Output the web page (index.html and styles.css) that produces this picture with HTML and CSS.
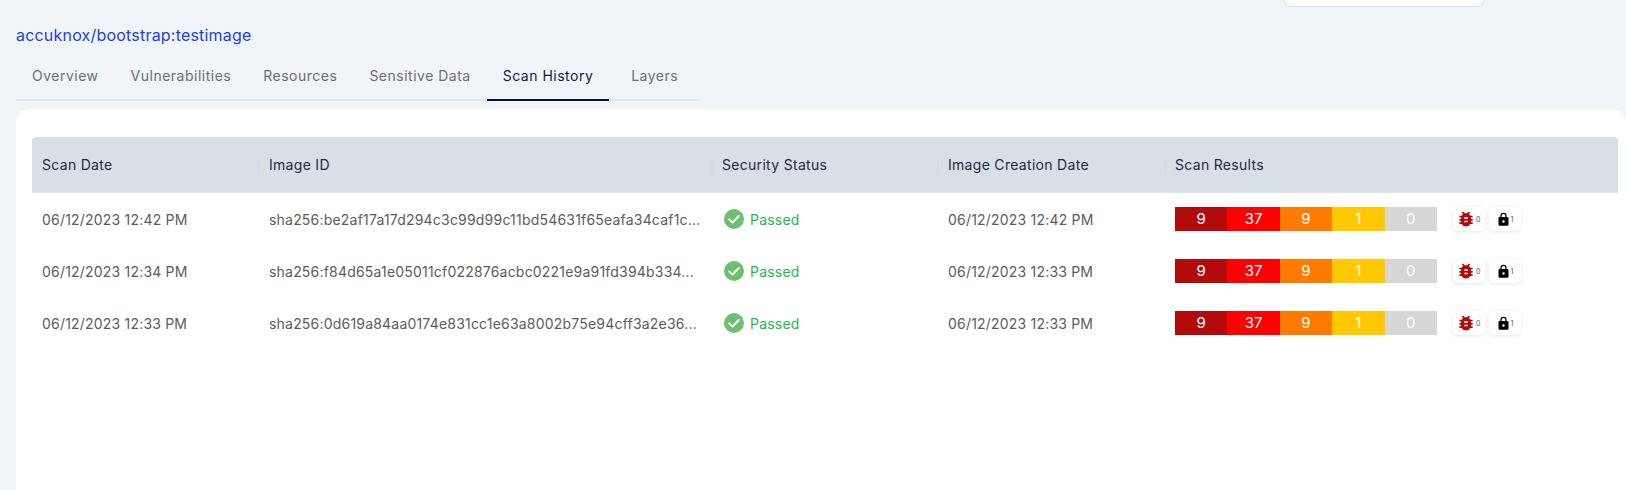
FILE: index.html
```html
<!DOCTYPE html>
<html lang="en">
<head>
    <meta charset="UTF-8">
    <meta name="viewport" content="width=device-width, initial-scale=1.0">
    <title>Scan History</title>
    <link rel="stylesheet" href="styles.css">
</head>
<body>
    <div class="topbar"><div class="search-stub"></div></div>
    <h1 class="image-name">accuknox/bootstrap:testimage</h1>

    <div class="tabs">
        <a class="tab">Overview</a>
        <a class="tab">Vulnerabilities</a>
        <a class="tab">Resources</a>
        <a class="tab">Sensitive Data</a>
        <a class="tab active">Scan History</a>
        <a class="tab tab-last">Layers</a>
    </div>

    <div class="card">
        <div class="row head">
            <div>Scan Date</div>
            <div>Image ID</div>
            <div>Security Status</div>
            <div>Image Creation Date</div>
            <div>Scan Results</div>
        </div>

        <div class="row">
            <div>06/12/2023 12:42 PM</div>
            <div class="hash">sha256:be2af17a17d294c3c99d99c11bd54631f65eafa34caf1c...</div>
            <div class="status">
                <svg class="check" viewBox="0 0 20 20"><circle cx="10" cy="10" r="10"/><path d="M5.2 10.4l3.3 3.2 6.3-6.6"/></svg>
                Passed
            </div>
            <div>06/12/2023 12:42 PM</div>
            <div class="results">
                <div class="bar"><span class="crit">9</span><span class="high">37</span><span class="med">9</span><span class="low">1</span><span class="none">0</span></div>
                <div class="chip">
                    <svg class="bug" viewBox="0 0 24 24"><path d="M20 8h-2.8a6 6 0 0 0-1.8-2l1.6-1.6L15.6 3l-2.2 2.2a6 6 0 0 0-2.8 0L8.4 3 7 4.4 8.6 6a6 6 0 0 0-1.8 2H4v2h2.1a6 6 0 0 0-.1 1v1H4v2h2v1c0 .3 0 .7.1 1H4v2h2.8a6 6 0 0 0 10.4 0H20v-2h-2.1c.1-.3.1-.7.1-1v-1h2v-2h-2v-1c0-.3 0-.7-.1-1H20zm-6 8h-4v-2h4zm0-4h-4v-2h4z"/></svg>
                    <small>0</small>
                </div>
                <div class="chip">
                    <svg class="lock" viewBox="0 0 24 24"><path d="M18 8h-1V6a5 5 0 0 0-10 0v2H6a2 2 0 0 0-2 2v10c0 1.1.9 2 2 2h12a2 2 0 0 0 2-2V10a2 2 0 0 0-2-2zm-6 9a2 2 0 1 1 0-4 2 2 0 0 1 0 4zM9 8V6a3 3 0 0 1 6 0v2z"/></svg>
                    <small>1</small>
                </div>
            </div>
        </div>

        <div class="row">
            <div>06/12/2023 12:34 PM</div>
            <div class="hash">sha256:f84d65a1e05011cf022876acbc0221e9a91fd394b334...</div>
            <div class="status">
                <svg class="check" viewBox="0 0 20 20"><circle cx="10" cy="10" r="10"/><path d="M5.2 10.4l3.3 3.2 6.3-6.6"/></svg>
                Passed
            </div>
            <div>06/12/2023 12:33 PM</div>
            <div class="results">
                <div class="bar"><span class="crit">9</span><span class="high">37</span><span class="med">9</span><span class="low">1</span><span class="none">0</span></div>
                <div class="chip">
                    <svg class="bug" viewBox="0 0 24 24"><path d="M20 8h-2.8a6 6 0 0 0-1.8-2l1.6-1.6L15.6 3l-2.2 2.2a6 6 0 0 0-2.8 0L8.4 3 7 4.4 8.6 6a6 6 0 0 0-1.8 2H4v2h2.1a6 6 0 0 0-.1 1v1H4v2h2v1c0 .3 0 .7.1 1H4v2h2.8a6 6 0 0 0 10.4 0H20v-2h-2.1c.1-.3.1-.7.1-1v-1h2v-2h-2v-1c0-.3 0-.7-.1-1H20zm-6 8h-4v-2h4zm0-4h-4v-2h4z"/></svg>
                    <small>0</small>
                </div>
                <div class="chip">
                    <svg class="lock" viewBox="0 0 24 24"><path d="M18 8h-1V6a5 5 0 0 0-10 0v2H6a2 2 0 0 0-2 2v10c0 1.1.9 2 2 2h12a2 2 0 0 0 2-2V10a2 2 0 0 0-2-2zm-6 9a2 2 0 1 1 0-4 2 2 0 0 1 0 4zM9 8V6a3 3 0 0 1 6 0v2z"/></svg>
                    <small>1</small>
                </div>
            </div>
        </div>

        <div class="row">
            <div>06/12/2023 12:33 PM</div>
            <div class="hash">sha256:0d619a84aa0174e831cc1e63a8002b75e94cff3a2e36...</div>
            <div class="status">
                <svg class="check" viewBox="0 0 20 20"><circle cx="10" cy="10" r="10"/><path d="M5.2 10.4l3.3 3.2 6.3-6.6"/></svg>
                Passed
            </div>
            <div>06/12/2023 12:33 PM</div>
            <div class="results">
                <div class="bar"><span class="crit">9</span><span class="high">37</span><span class="med">9</span><span class="low">1</span><span class="none">0</span></div>
                <div class="chip">
                    <svg class="bug" viewBox="0 0 24 24"><path d="M20 8h-2.8a6 6 0 0 0-1.8-2l1.6-1.6L15.6 3l-2.2 2.2a6 6 0 0 0-2.8 0L8.4 3 7 4.4 8.6 6a6 6 0 0 0-1.8 2H4v2h2.1a6 6 0 0 0-.1 1v1H4v2h2v1c0 .3 0 .7.1 1H4v2h2.8a6 6 0 0 0 10.4 0H20v-2h-2.1c.1-.3.1-.7.1-1v-1h2v-2h-2v-1c0-.3 0-.7-.1-1H20zm-6 8h-4v-2h4zm0-4h-4v-2h4z"/></svg>
                    <small>0</small>
                </div>
                <div class="chip">
                    <svg class="lock" viewBox="0 0 24 24"><path d="M18 8h-1V6a5 5 0 0 0-10 0v2H6a2 2 0 0 0-2 2v10c0 1.1.9 2 2 2h12a2 2 0 0 0 2-2V10a2 2 0 0 0-2-2zm-6 9a2 2 0 1 1 0-4 2 2 0 0 1 0 4zM9 8V6a3 3 0 0 1 6 0v2z"/></svg>
                    <small>1</small>
                </div>
            </div>
        </div>
    </div>
</body>
</html>
```

FILE: styles.css
```css
body {
    margin: 0;
    height: 490px;
    overflow: hidden;
    background: #f1f4f9;
    font-family: Inter, "Liberation Sans", sans-serif;
    color: #4a4a4a;
}

.topbar {
    display: flex;
    justify-content: flex-end;
    padding-right: 142px;
    height: 7px;
}
.search-stub {
    width: 198px;
    height: 6px;
    background: #fff;
    border: 1px solid #d8dcea;
    border-top: none;
    border-radius: 0 0 10px 10px;
}

.image-name {
    margin: 18px 0 0 16px;
    height: 20px;
    font-size: 16px;
    line-height: 20px;
    letter-spacing: 0.2px;
    font-weight: 400;
    color: #1c3fe8;
}

.tabs {
    display: flex;
    margin: 10px 0 0 16px;
    width: 684px;
    height: 44px;
    border-bottom: 2px solid #e3e7f0;
}
.tab {
    padding: 0 16px;
    height: 44px;
    line-height: 42px;
    font-size: 14px;
    letter-spacing: 0.5px;
    color: #6f6f6f;
    white-space: nowrap;
}
.tab.active {
    color: #101c3d;
    border-bottom: 2px solid #0b1437;
}
.tab-last {
    flex: 1;
    padding: 0;
    text-align: center;
}

.card {
    box-sizing: border-box;
    margin: 8px 0 0 16px;
    height: 381px;
    padding: 28px 8px 0 16px;
    background: #fff;
    border-radius: 14px 14px 0 0;
}

.row {
    display: grid;
    grid-template-columns: 227px 453px 226px 227px 1fr;
    align-items: center;
    height: 52px;
    padding-left: 10px;
    font-size: 14px;
    letter-spacing: 0.2px;
    color: #5c5c5c;
}
.row.head {
    height: 56px;
    background: #d9dfe7;
    border-bottom: 1px solid #e2e3f2;
    box-sizing: border-box;
    border-radius: 4px 4px 0 0;
    letter-spacing: 0.3px;
    color: #1e2a3e;
}
.head div + div::before {
    content: "";
    display: inline-block;
    vertical-align: middle;
    width: 2px;
    height: 14px;
    margin: 0 9px 0 -11px;
    background: #d7dce4;
}

.hash {
    white-space: nowrap;
}

.status {
    display: flex;
    align-items: center;
    gap: 6px;
    padding-left: 2px;
    color: #1fb84c;
}
.check {
    width: 20px;
    height: 20px;
}
.check circle {
    fill: #6cc070;
}
.check path {
    fill: none;
    stroke: #fff;
    stroke-width: 2;
    stroke-linecap: round;
    stroke-linejoin: round;
}

.results {
    display: flex;
    align-items: center;
    gap: 4px;
}
.bar {
    display: flex;
    width: 262px;
    height: 24px;
    margin-right: 12px;
}
.bar span {
    flex: 1;
    text-align: center;
    line-height: 24px;
    font-size: 15px;
    letter-spacing: 0;
    color: #fff;
}
.crit { background: #b30b0b; }
.high { background: #ff0000; }
.med { background: #ff7b00; }
.low { background: #ffc800; }
.none { background: #d6d6d6; }

.chip {
    display: flex;
    align-items: center;
    width: 32px;
    height: 24px;
    background: #fff;
    border-radius: 5px;
    box-shadow: 0 1px 4px rgba(0, 0, 0, 0.1);
}
.chip small {
    font-size: 7px;
    color: #555;
}
.bug {
    width: 20px;
    height: 20px;
    margin-left: 3px;
    fill: #b30b0b;
}
.lock {
    width: 15px;
    height: 15px;
    margin-left: 6.5px;
    fill: #000;
}
```
